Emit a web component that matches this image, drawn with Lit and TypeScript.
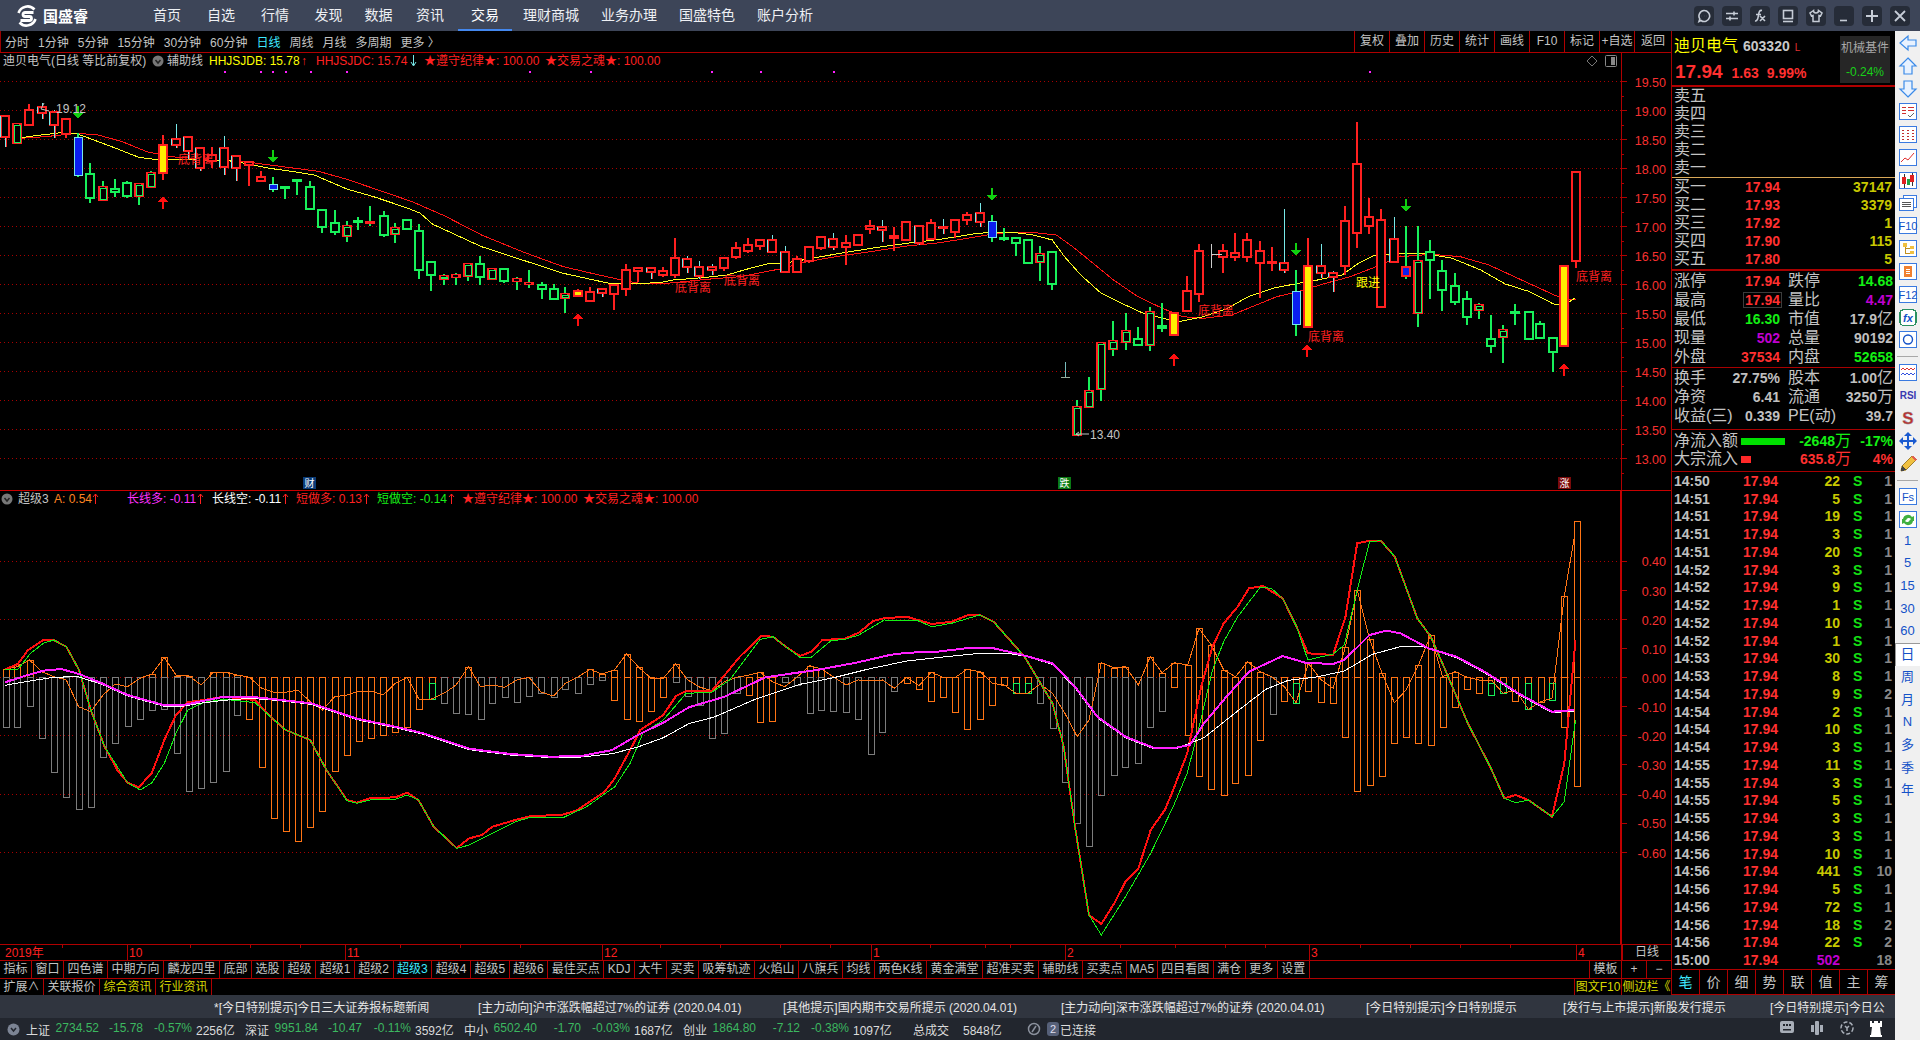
// tdx style stock terminal, price pane + indicator pane + quote panel
import { LitElement, html, css, svg } from 'lit';
import { customElement } from 'lit/decorators.js';

type Pt = [number, number];
type Candle = [number, number, number, number, number, string];
type Bar = [number, number, string, number?];

// the numbers below are read off crops of the reference, each crop has its own scale
const mapPts = (pts: Pt[], sx: number, ox: number, oy: number): Pt[] =>
	pts.map(([x, y]) => [ox + x / sx, oy + y / 3] as Pt);
const toPoints = (pts: Pt[]) => pts.map(p => `${p[0].toFixed(1)},${p[1].toFixed(1)}`).join(' ');

const candlesA: Candle[] = [
	[12, 78, 78, 142, 172, 'c'], [41, 100, 103, 160, 162, 'm'], [70, 42, 60, 106, 106, 'r'], [103, 38, 52, 68, 88, 'c'],
	[133, 60, 67, 105, 143, 'c'], [162, 88, 88, 132, 143, 'r'], [191, 130, 142, 255, 260, 'b'], [221, 220, 253, 325, 340, 'g'],
	[252, 273, 290, 330, 330, 'm'], [282, 268, 296, 307, 320, 'g'], [311, 273, 280, 318, 323, 'g'], [340, 283, 283, 317, 345, 'm'],
	[370, 243, 248, 290, 290, 'm'], [399, 135, 165, 248, 270, 'y'], [431, 102, 148, 166, 175, 'c'], [461, 142, 142, 182, 208, 'c'],
	[490, 175, 175, 233, 242, 'c'], [519, 172, 195, 212, 235, 'r'], [549, 138, 175, 230, 255, 'c'], [578, 198, 198, 233, 273, 'c'],
	[610, 215, 215, 226, 288, 'r'], [640, 243, 262, 272, 275, 'r'], [669, 262, 282, 297, 305, 'b'], [699, 290, 292, 295, 327, 'g'],
	[728, 271, 271, 274, 315, 'g'], [760, 273, 290, 358, 358, 'g'], [790, 361, 361, 412, 428, 'g'], [820, 360, 400, 425, 435, 'g'],
	[849, 392, 408, 437, 457, 'm'], [878, 380, 392, 396, 420, 'g'], [907, 348, 395, 397, 408, 'm'], [940, 363, 378, 435, 440, 'g'],
	[968, 400, 415, 433, 458, 'm'], [997, 391, 391, 418, 418, 'g'], [1027, 402, 424, 541, 567, 'g'], [1057, 517, 517, 556, 602, 'g'],
	[1088, 552, 559, 566, 585, 'm'], [1117, 550, 555, 560, 585, 'm'], [1147, 521, 521, 558, 573, 'm'], [1176, 498, 523, 560, 585, 'g'],
	[1206, 537, 537, 567, 567, 'm'], [1236, 538, 538, 572, 578, 'g'], [1266, 562, 568, 572, 600, 'm'], [1297, 541, 580, 583, 595, 'm'],
	[1327, 576, 584, 598, 627, 'g'], [1357, 583, 598, 626, 630, 'g'], [1385, 591, 612, 625, 668, 'm'], [1417, 597, 604, 617, 622, 'y'],
	[1446, 592, 605, 632, 632, 'r'], [1476, 596, 596, 610, 622, 'c'], [1505, 586, 586, 611, 660, 'r'], [1533, 522, 540, 598, 617, 'r'],
	[1563, 535, 535, 544, 576, 'r'],
];
const candlesB: Candle[] = [
	[33, 292, 295, 306, 327, 'c'], [68, 292, 304, 314, 320, 'r'], [104, 205, 263, 316, 325, 'r'], [141, 258, 267, 292, 308, 'c'],
	[178, 273, 292, 317, 328, 'c'], [217, 283, 290, 301, 315, 'c'], [252, 263, 263, 295, 302, 'r'], [288, 217, 233, 260, 267, 'r'],
	[324, 205, 224, 243, 249, 'r'], [360, 209, 209, 227, 240, 'r'], [397, 195, 210, 245, 248, 'c'], [436, 228, 247, 307, 308, 'c'],
	[470, 258, 266, 305, 305, 'r'], [507, 230, 230, 272, 280, 'r'], [543, 198, 202, 234, 240, 'r'], [580, 190, 208, 231, 240, 'c'],
	[618, 195, 219, 231, 285, 'r'], [654, 194, 194, 224, 228, 'r'], [690, 150, 167, 176, 192, 'r'], [727, 150, 170, 180, 215, 'c'],
	[762, 170, 197, 205, 243, 'r'], [798, 157, 157, 209, 209, 'r'], [838, 168, 168, 220, 225, 'c'], [873, 148, 158, 208, 208, 'r'],
	[909, 148, 170, 175, 192, 'c'], [945, 150, 150, 185, 203, 'r'], [981, 127, 135, 151, 165, 'r'], [1020, 98, 130, 157, 170, 'c'],
	[1056, 135, 152, 200, 215, 'b'], [1092, 174, 204, 207, 212, 'g'], [1129, 205, 205, 218, 258, 'g'], [1165, 211, 211, 278, 280, 'g'],
	[1200, 228, 252, 277, 332, 'm'],
];
const candlesC: Candle[] = [
	[30, 453, 456, 553, 570, 'g'], [90, 900, 920, 1005, 1005, 'm'], [120, 832, 873, 922, 922, 'm'], [150, 730, 730, 868, 902, 'm'],
	[180, 663, 723, 748, 767, 'm'], [210, 640, 692, 727, 750, 'm'], [240, 682, 718, 736, 736, 'g'], [270, 622, 636, 736, 752, 'm'],
	[299, 610, 677, 684, 697, 'g'], [328, 638, 638, 704, 704, 'y'], [360, 528, 573, 634, 634, 'r'], [390, 432, 452, 583, 605, 'r'],
	[449, 433, 453, 470, 518, 'r'], [478, 400, 458, 472, 482, 'r'], [507, 400, 420, 472, 485, 'r'], [539, 423, 452, 490, 595, 'r'],
	[568, 441, 487, 490, 512, 'r'], [598, 327, 490, 511, 518, 'c'], [627, 510, 573, 672, 708, 'b'], [656, 414, 498, 680, 680, 'y'],
	[689, 432, 497, 520, 535, 'c'], [717, 513, 520, 532, 575, 'c'], [747, 318, 362, 498, 525, 'r'], [776, 66, 192, 400, 443, 'r'],
	[806, 293, 350, 377, 402, 'r'], [836, 327, 360, 622, 622, 'r'], [868, 352, 418, 487, 487, 'c'], [897, 378, 500, 527, 537, 'u'],
	[927, 378, 483, 640, 680, 'm'], [956, 420, 457, 481, 596, 'g'], [986, 480, 512, 571, 633, 'g'], [1017, 520, 557, 607, 614, 'g'],
	[1047, 573, 598, 651, 674, 'g'], [1076, 610, 616, 629, 656, 'm'], [1105, 645, 718, 738, 758, 'g'], [1134, 676, 690, 712, 788, 'm'],
	[1164, 612, 636, 638, 674, 'g'], [1197, 637, 637, 718, 718, 'g'], [1226, 663, 673, 715, 716, 'g'], [1256, 710, 715, 757, 815, 'g'],
	[1285, 497, 497, 737, 737, 'y'], [1314, 215, 215, 484, 503, 'r'],
];

const toFull = (list: Candle[], sx: number, ox: number, oy: number): Candle[] =>
	list.map(([x, a, b, c, d, k]) => [
		Math.round(ox + x / sx), Math.round(oy + a / 3), Math.round(oy + b / 3),
		Math.round(oy + c / 3), Math.round(oy + d / 3), k,
	] as Candle);

const candles = [...toFull(candlesA, 2.45, 0, 90), ...toFull(candlesB, 3, 640, 170), ...toFull(candlesC, 2.45, 1040, 100)];

const maYellow: Pt[] = [
	...mapPts([[50, 143], [100, 135], [150, 128], [190, 132], [230, 150], [280, 173], [340, 202], [390, 210], [440, 208], [500, 210], [560, 212], [600, 220], [660, 235], [720, 245], [770, 255], [850, 297], [920, 322], [1000, 355], [1030, 370], [1060, 403], [1100, 425], [1180, 470], [1280, 510], [1380, 550], [1500, 582]], 2.45, 0, 90),
	...mapPts([[0, 340], [60, 338], [100, 330], [200, 322], [260, 315], [330, 295], [390, 280], [430, 280], [500, 268], [600, 250], [700, 234], [800, 220], [900, 208], [1000, 192], [1060, 186], [1110, 186], [1180, 195], [1240, 210]], 3, 640, 170),
	...mapPts([[0, 410], [30, 420], [60, 470], [100, 525], [150, 580], [200, 610], [250, 638], [300, 655], [340, 665], [400, 650], [460, 625], [510, 590], [570, 565], [620, 553], [680, 540], [740, 525], [780, 490], [820, 466], [900, 460], [950, 462], [1010, 475], [1080, 510], [1140, 552], [1200, 575], [1258, 612], [1285, 615], [1310, 595]], 2.45, 1040, 100),
];
const maRed: Pt[] = [
	...mapPts([[50, 145], [110, 140], [190, 130], [240, 135], [300, 155], [360, 185], [420, 200], [500, 208], [600, 215], [680, 228], [780, 244], [850, 268], [950, 310], [1010, 335], [1090, 378], [1180, 435], [1280, 485], [1380, 530], [1450, 550], [1530, 572]], 2.45, 0, 90),
	...mapPts([[0, 340], [80, 340], [200, 328], [300, 320], [430, 295], [500, 275], [600, 258], [700, 244], [800, 228], [900, 218], [1000, 202], [1060, 192], [1120, 187], [1180, 187]], 3, 640, 170),
	...mapPts([[0, 400], [40, 405], [80, 440], [130, 490], [180, 540], [240, 590], [300, 625], [350, 650], [400, 655], [470, 645], [530, 615], [580, 590], [640, 572], [700, 550], [760, 530], [830, 497], [880, 470], [960, 463], [1030, 470], [1100, 495], [1180, 540], [1260, 585], [1290, 597], [1312, 597]], 2.45, 1040, 100),
];

// x, bottom, colour (g grey, o orange, n green tail), top of the orange part above zero
const barsA: Bar[] = [
	[11, 742, 'g', 568], [34, 742, 'g', 552], [58, 677, 'g', 540], [82, 775, 'g'], [106, 877, 'g'], [130, 952, 'g'], [154, 988, 'g'], [178, 980, 'g'],
	[202, 830, 'g'], [226, 790, 'g'], [250, 737, 'g'], [274, 716, 'g'], [298, 690, 'g', 582], [322, 686, 'g', 532], [346, 820, 'g', 587], [370, 932, 'g', 587],
	[394, 925, 'g'], [418, 905, 'g', 577], [442, 872, 'g', 577], [465, 706, 'g', 585], [489, 718, 'o'], [513, 862, 'o'], [537, 1015, 'o'], [560, 1052, 'o'],
	[584, 1082, 'o'], [608, 1042, 'o'], [632, 992, 'o'], [656, 872, 'o'], [680, 826, 'o'], [703, 784, 'o'], [727, 775, 'o'], [751, 765, 'o'],
	[775, 757, 'o'], [798, 740, 'o'], [822, 686, 'o'], [846, 657, 'n'], [870, 670, 'g'], [894, 700, 'g'], [918, 703, 'g', 560], [942, 716, 'g'],
	[965, 668, 'g'], [989, 652, 'g'], [1013, 665, 'g'], [1037, 648, 'g'], [1061, 638, 'g'], [1085, 650, 'g'], [1108, 628, 'g'], [1132, 640, 'g'],
	[1156, 612, 'g', 568], [1180, 600, 'g', 582], [1204, 660, 'o', 570], [1228, 718, 'o', 522], [1252, 722, 'o', 562], [1276, 694, 'o'], [1300, 650, 'o'], [1324, 605, 'g', 552],
	[1348, 648, 'g'], [1372, 676, 'g'], [1396, 775, 'g'], [1420, 758, 'g'], [1444, 640, 'g'], [1468, 646, 'o'], [1490, 727, 'o', 577], [1514, 723, 'o'],
	[1538, 606, 'g'], [1562, 615, 'g'],
];
const barsB: Bar[] = [
	[17, 700, 'g', 557], [38, 690, 'g', 567], [59, 692, 'g'], [82, 695, 'g'], [104, 718, 'g'], [126, 823, 'g'], [147, 757, 'g'], [168, 633, 'g'],
	[190, 610, 'o'], [212, 628, 'o'], [234, 664, 'o', 577], [255, 652, 'o'], [277, 695, 'o'], [298, 746, 'o', 568], [321, 718, 'o', 575], [343, 676, 'o'],
	[364, 615, 'o'], [385, 640, 'n'], [406, 640, 'n'], [428, 670, 'g'], [450, 743, 'g'], [472, 907, 'g'], [494, 1030, 'g'], [515, 1097, 'g'],
	[537, 946, 'g', 548], [559, 885, 'g', 563], [580, 860, 'g', 560], [603, 850, 'g'], [624, 740, 'g', 530], [645, 693, 'g', 578], [667, 620, 'o', 548], [691, 765, 'o', 555],
	[711, 887, 'o', 445], [733, 928, 'o', 495], [755, 945, 'o', 570], [776, 910, 'o'], [798, 886, 'o', 545], [820, 780, 'o', 575], [842, 703, 'g'], [863, 662, 'o'],
	[884, 668, 'n'], [906, 634, 'o', 550], [929, 665, 'o'], [950, 670, 'o'], [972, 770, 'o', 500], [993, 932, 'o', 330], [1015, 916, 'o', 478], [1037, 888, 'o', 578],
	[1059, 790, 'o'], [1080, 770, 'o'], [1102, 790, 'o', 556], [1124, 796, 'o', 465], [1145, 740, 'o'], [1167, 680, 'o', 575], [1189, 628, 'o'], [1210, 640, 'o'],
	[1232, 644, 'n'], [1253, 640, 'n'], [1275, 662, 'o'], [1298, 688, 'n'], [1320, 665, 'o'], [1340, 660, 'n'], [1362, 740, 'o', 348], [1384, 917, 'o', 124],
];

const zigzag: Pt[] = [
	...mapPts([[10, 568], [34, 560], [58, 540], [82, 575], [106, 590], [130, 600], [154, 680], [178, 695], [202, 645], [226, 612], [250, 620], [274, 595], [298, 582], [322, 532], [346, 587], [370, 587], [394, 615], [418, 577], [442, 577], [465, 585], [489, 592], [513, 625], [537, 637], [560, 637], [584, 630], [608, 665], [632, 690], [656, 650], [680, 645], [703, 633], [727, 633], [751, 645], [775, 610], [798, 592], [822, 660], [846, 657], [870, 640], [894, 615], [918, 560], [942, 620], [965, 615], [989, 622], [1013, 600], [1037, 592], [1061, 637], [1085, 648], [1108, 610], [1132, 592], [1156, 568], [1180, 582], [1204, 570], [1228, 522], [1252, 562], [1276, 595], [1300, 595], [1324, 552], [1348, 600], [1372, 622], [1396, 632], [1420, 605], [1444, 592], [1468, 585], [1490, 577], [1514, 605], [1538, 620], [1562, 592]], 1.96, 0, 480),
	...mapPts([[17, 557], [38, 567], [59, 590], [82, 615], [104, 600], [126, 602], [147, 600], [168, 625], [190, 592], [212, 617], [234, 577], [255, 592], [277, 592], [298, 568], [321, 575], [343, 610], [364, 615], [385, 640], [406, 640], [428, 612], [450, 640], [472, 700], [494, 770], [515, 720], [537, 548], [559, 563], [580, 560], [603, 615], [624, 530], [645, 578], [667, 548], [691, 555], [711, 445], [733, 495], [755, 570], [776, 590], [798, 545], [820, 575], [842, 592], [863, 620], [884, 668], [906, 550], [929, 600], [950, 625], [972, 500], [993, 330], [1015, 478], [1037, 578], [1059, 668], [1080, 630], [1102, 556], [1124, 465], [1145, 590], [1167, 575], [1189, 592], [1210, 600], [1232, 600], [1253, 640], [1275, 630], [1298, 688], [1320, 665], [1340, 655], [1362, 348], [1380, 170]], 1.782, 800, 480),
];

const lineRed: Pt[] = [
	...mapPts([[10, 568], [35, 552], [55, 510], [85, 480], [105, 480], [130, 500], [155, 570], [178, 690], [205, 800], [230, 870], [250, 908], [272, 922], [298, 878], [322, 780], [345, 705], [368, 667], [400, 660], [440, 650], [500, 660], [530, 710], [560, 750], [608, 780], [640, 870], [680, 960], [700, 968], [725, 955], [775, 952], [798, 938], [820, 960], [850, 1040], [895, 1104], [920, 1075], [945, 1065], [965, 1040], [1010, 1020], [1040, 1008], [1100, 1005], [1130, 992], [1185, 935], [1205, 895], [1235, 810], [1255, 750], [1300, 705], [1325, 648], [1345, 633], [1395, 633], [1450, 530], [1492, 468], [1515, 470], [1540, 500]], 1.96, 0, 480),
	...mapPts([[0, 528], [20, 515], [40, 480], [80, 476], [105, 458], [130, 423], [150, 415], [190, 410], [235, 432], [270, 425], [300, 405], [320, 404], [345, 425], [400, 530], [450, 670], [470, 800], [490, 1040], [515, 1305], [537, 1332], [560, 1270], [580, 1205], [603, 1165], [625, 1050], [650, 990], [665, 930], [690, 820], [715, 620], [735, 500], [755, 430], [780, 380], [800, 325], [825, 318], [860, 355], [885, 440], [905, 520], [950, 525], [972, 410], [993, 190], [1015, 182], [1035, 182], [1060, 230], [1100, 415], [1124, 470], [1150, 570], [1190, 730], [1230, 860], [1255, 955], [1275, 945], [1298, 960], [1340, 1010], [1362, 850], [1382, 480]], 1.782, 800, 480),
];
const lineGreen: Pt[] = [
	...mapPts([[10, 568], [35, 568], [60, 520], [85, 490], [105, 480], [130, 500], [155, 570], [178, 690], [205, 800], [250, 908], [275, 930], [298, 908], [322, 850], [345, 760], [368, 690], [400, 667], [440, 658], [500, 668], [530, 710], [560, 750], [608, 780], [640, 870], [680, 962], [700, 970], [725, 960], [775, 958], [798, 945], [820, 960], [850, 1040], [895, 1105], [920, 1095], [965, 1060], [1010, 1025], [1040, 1012], [1105, 1012], [1150, 980], [1205, 920], [1235, 850], [1260, 760], [1300, 720], [1345, 640], [1395, 637], [1430, 600], [1490, 478], [1515, 470], [1540, 500]], 1.96, 0, 480),
	...mapPts([[0, 532], [20, 532], [55, 482], [80, 478], [105, 465], [150, 420], [210, 422], [235, 440], [270, 430], [320, 405], [345, 425], [400, 530], [450, 670], [470, 800], [490, 1040], [515, 1305], [537, 1365], [580, 1250], [625, 1120], [665, 980], [690, 880], [710, 750], [735, 570], [755, 485], [780, 410], [820, 322], [840, 325], [860, 355], [885, 440], [905, 540], [950, 522], [970, 495], [993, 330], [1015, 185], [1035, 182], [1060, 230], [1100, 415], [1124, 470], [1150, 570], [1190, 730], [1230, 860], [1255, 955], [1275, 968], [1298, 960], [1340, 1010], [1362, 965], [1382, 720]], 1.782, 800, 480),
];
const lineMagenta: Pt[] = [
	...mapPts([[10, 607], [50, 587], [85, 572], [120, 567], [155, 582], [200, 610], [250, 645], [320, 675], [360, 675], [400, 662], [440, 650], [490, 650], [540, 658], [610, 670], [700, 716], [780, 742], [830, 760], [920, 806], [1000, 822], [1080, 830], [1140, 828], [1200, 810], [1250, 765], [1300, 728], [1350, 682], [1420, 650], [1500, 592]], 1.96, 0, 480),
	...mapPts([[0, 577], [30, 570], [100, 548], [160, 525], [190, 518], [240, 516], [300, 504], [340, 503], [390, 522], [450, 550], [490, 620], [530, 710], [580, 770], [630, 803], [670, 803], [695, 795], [720, 730], [760, 650], [800, 575], [860, 528], [900, 548], [950, 552], [970, 540], [1015, 465], [1045, 452], [1070, 460], [1120, 505], [1170, 530], [1220, 575], [1280, 640], [1340, 695], [1380, 690]], 1.782, 800, 480),
];
const lineWhite: Pt[] = [
	...mapPts([[10, 613], [50, 602], [100, 590], [150, 586], [200, 610], [250, 645], [320, 675], [360, 675], [400, 665], [440, 658], [490, 652], [540, 658], [610, 670], [700, 716], [780, 742], [830, 760], [920, 806], [1000, 822], [1080, 830], [1140, 828], [1200, 818], [1250, 798], [1300, 770], [1350, 728], [1400, 708], [1480, 655]], 1.96, 0, 480),
	...mapPts([[0, 610], [60, 590], [120, 565], [190, 540], [260, 527], [320, 517], [370, 517], [400, 525], [450, 550], [490, 620], [530, 710], [580, 770], [630, 803], [670, 803], [720, 770], [780, 690], [830, 625], [870, 598], [920, 588], [970, 570], [1020, 520], [1070, 497], [1110, 497], [1170, 530], [1220, 575], [1280, 640], [1340, 695], [1380, 690]], 1.782, 800, 480),
];

const upArrows: Pt[] = [[163, 203], [578, 320], [1174, 360], [1307, 351], [1564, 370]];
const downArrows: Pt[] = [[78, 112], [273, 156], [992, 194], [1296, 249], [1406, 205]];
const divergence: Pt[] = [[196, 164], [693, 292], [742, 285], [1216, 315], [1326, 341], [1594, 281]];
const dots = [224, 260, 272, 285, 310, 346, 529, 590, 711, 760, 833, 1369];

const NAV: [string, number][] = [
	['首页', 54], ['自选', 54], ['行情', 54], ['发现', 53], ['数据', 47], ['资讯', 56], ['交易', 54],
	['理财商城', 78], ['业务办理', 78], ['国盛特色', 78], ['账户分析', 78],
];
const PERIODS = ['分时', '1分钟', '5分钟', '15分钟', '30分钟', '60分钟', '日线', '周线', '月线', '多周期', '更多 〉'];
const TOOLS = ['复权', '叠加', '历史', '统计', '画线', 'F10', '标记', '+自选', '返回'];
const TABS = [
	'指标', '窗口', '四色谱', '中期方向', '麟龙四里', '底部', '选股', '超级', '超级1', '超级2', '超级3', '超级4', '超级5', '超级6',
	'最佳买点', 'KDJ', '大牛', '买卖', '吸筹轨迹', '火焰山', '八旗兵', '均线', '两色K线', '黄金满堂', '超准买卖', '辅助线', '买卖点',
	'MA5', '四目看图', '满仓', '更多', '设置',
];
const BOOK: [string, string, string][] = [
	['买一', '17.94', '37147'], ['买二', '17.93', '3379'], ['买三', '17.92', '1'], ['买四', '17.90', '115'], ['买五', '17.80', '5'],
];
const TRADES: [string, string, string][] = [
	['14:50', '22', '1'], ['14:51', '5', '1'], ['14:51', '19', '1'], ['14:51', '3', '1'], ['14:51', '20', '1'], ['14:52', '3', '1'], ['14:52', '9', '1'],
	['14:52', '1', '1'], ['14:52', '10', '1'], ['14:52', '1', '1'], ['14:53', '30', '1'], ['14:53', '8', '1'], ['14:54', '9', '2'], ['14:54', '2', '1'],
	['14:54', '10', '1'], ['14:54', '3', '1'], ['14:55', '11', '1'], ['14:55', '3', '1'], ['14:55', '5', '1'], ['14:55', '3', '1'], ['14:56', '3', '1'],
	['14:56', '10', '1'], ['14:56', '441', '10'], ['14:56', '5', '1'], ['14:56', '72', '1'], ['14:56', '18', '2'], ['14:56', '22', '2'],
];
const NEWS: [string, number][] = [
	['*[今日特别提示]今日三大证券报标题新闻', 264], ['[主力动向]沪市涨跌幅超过7%的证券 (2020.04.01)', 305],
	['[其他提示]国内期市交易所提示 (2020.04.01)', 278], ['[主力动向]深市涨跌幅超过7%的证券 (2020.04.01)', 305],
	['[今日特别提示]今日特别提示', 197], ['[发行与上市提示]新股发行提示', 207], ['[今日特别提示]今日公', 125],
];
const INDEXES: string[][] = [
	['上证', '2734.52', '-15.78', '-0.57%', '2256亿'], ['深证', '9951.84', '-10.47', '-0.11%', '3592亿'],
	['中小', '6502.40', '-1.70', '-0.03%', '1687亿'], ['创业', '1864.80', '-7.12', '-0.38%', '1097亿'],
];

const RED = '#ff2020';
const GREEN = '#18f05a';
const CYAN = '#78e8e8';

const candle = ([x, hi, top, bot, lo, kind]: Candle) => {
	const bodyY = top;
	const bodyH = Math.max(bot - top, 1);
	const x0 = x - 4;
	switch (kind) {
		case 'y':
			return svg`<line x1=${x} x2=${x} y1=${hi} y2=${lo} stroke=${RED} stroke-width="2"/>
				<rect x=${x0} y=${bodyY} width="8" height=${bodyH} fill="#ffee00" stroke=${RED} stroke-width="2"/>`;
		case 'b':
			return svg`<line x1=${x} x2=${x} y1=${hi} y2=${lo} stroke=${GREEN} stroke-width="2"/>
				<rect x=${x0} y=${bodyY} width="8" height=${bodyH} fill="#0a1ef0" stroke=${CYAN}/>`;
		case 'u':
			return svg`<line x1=${x} x2=${x} y1=${hi} y2=${lo} stroke=${GREEN} stroke-width="2"/>
				<rect x=${x0} y=${bodyY} width="8" height=${bodyH} fill="#0a1ef0" stroke=${RED} stroke-width="2"/>`;
		case 'c':
			return svg`<line x1=${x} x2=${x} y1=${hi} y2=${lo} stroke=${CYAN}/>
				<line x1=${x + 1} x2=${x + 1} y1=${top} y2=${lo} stroke=${RED}/>
				<rect x=${x0} y=${bodyY} width="8" height=${bodyH} fill="#000" stroke=${RED} stroke-width="2"/>
				<line x1=${x0 - 1} x2=${x0 - 1} y1=${top} y2=${bot} stroke=${CYAN}/>`;
		case 'm':
			return svg`<line x1=${x} x2=${x} y1=${hi} y2=${lo} stroke=${GREEN} stroke-width="2"/>
				<rect x=${x0} y=${bodyY} width="8" height=${bodyH} fill="#000" stroke=${RED} stroke-width="2"/>
				<line x1=${x0 + 3} x2=${x0 + 3} y1=${top} y2=${bot} stroke="#000" stroke-width="5"/>
				<rect x=${x0 + 1} y=${bodyY + 1} width="6" height=${Math.max(bodyH - 2, 0)} fill="none" stroke=${GREEN}/>`;
		case 'g':
			return svg`<line x1=${x} x2=${x} y1=${hi} y2=${lo} stroke=${GREEN} stroke-width="2"/>
				<rect x=${x0} y=${bodyY} width="8" height=${bodyH} fill="#000" stroke=${GREEN} stroke-width="2"/>`;
		default:
			return svg`<line x1=${x} x2=${x} y1=${hi} y2=${lo} stroke=${RED} stroke-width="2"/>
				<rect x=${x0} y=${bodyY} width="8" height=${bodyH} fill="#000" stroke=${RED} stroke-width="2"/>`;
	}
};

const arrow = (x: number, y: number, up: boolean, color: string) => {
	const d = up ? 1 : -1;
	return svg`<path d="M${x} ${y - 7 * d}L${x + 5} ${y - d}H${x + 1}V${y + 6 * d}H${x - 1}V${y - d}H${x - 5}Z" fill=${color}/>`;
};

const bars = (list: Bar[], sx: number, ox: number) =>
	list.map(([zx, bottom, kind, top]) => {
		const x = Math.round(ox + zx / sx) - 3;
		const y = (z: number) => Math.round(480 + z / 3);
		const zero = y(592);
		const col = kind === 'o' || kind === 'n' ? '#ff7414' : '#7c7c7c';
		const tail = kind === 'n' ? y(610) : zero;
		return svg`
			${top !== undefined ? svg`<rect x=${x} y=${y(top)} width="6" height=${zero - y(top)} class="hollow" stroke="#ff7414"/>` : ''}
			<rect x=${x} y=${zero} width="6" height=${Math.max(y(bottom) - zero, 1)} class="hollow" stroke=${col}/>
			${kind === 'n' ? svg`<rect x=${x} y=${tail} width="6" height=${y(bottom) - tail} class="hollow" stroke=${GREEN}/>` : ''}`;
	});

@customElement('sidebar-icon')
class SidebarIcon extends LitElement {
	static properties = { name: { type: String } };
	declare name: string;

	static styles = css`
		:host { display: block; width: 25px; height: 22.8px; }
		svg { display: block; margin: 0 auto; shape-rendering: crispEdges; }
		text { font-family: "Liberation Sans", sans-serif; }
		.blue { fill: #1452c8; font-size: 11px; }
		.rsi { fill: #3a3ab0; font-size: 10px; font-weight: bold; }
	`;

	render() {
		const box = svg`<rect x="2.5" y="3.5" width="17" height="16" fill="#fff" stroke="#3a7ae0"/>`;
		const label = (t: string) => svg`${box}<text x="11" y="15.5" text-anchor="middle" class="blue">${t}</text>`;
		const arrowPath = (d: string) => svg`<path d=${d} fill="#e8f2ff" stroke="#3a8ae8" stroke-width="1.2" style="shape-rendering:auto"/>`;
		let g: unknown = '';
		switch (this.name) {
			case 'left': g = arrowPath('M3 11 L11 4 V8 H19 V14 H11 V18Z'); break;
			case 'up': g = arrowPath('M11 3 L19 11 H15 V19 H7 V11 H3Z'); break;
			case 'down': g = arrowPath('M11 19 L19 11 H15 V3 H7 V11 H3Z'); break;
			case 'check':
				g = svg`${box}<path d="M5 7h4M11 7h6M5 10h4M11 10h6M5 13h4" stroke="#d03030"/><path d="M11 15l2 2 4-4" stroke="#666" fill="none"/>`;
				break;
			case 'grid':
				g = svg`${box}<path d="M5 7h3M10 7h3M15 7h3M5 10h3M10 10h3M15 10h3M5 13h3M10 13h3M15 13h3M5 16h3M10 16h3M15 16h3" stroke="#c03030" stroke-dasharray="2 1"/>`;
				break;
			case 'line':
				g = svg`${box}<path d="M4 16l4-4 3 2 6-7" stroke="#e03030" fill="none" style="shape-rendering:auto"/>`;
				break;
			case 'candle':
				g = svg`${box}<path d="M7 5v14M15 4v13" stroke="#333"/><rect x="5" y="8" width="4" height="7" fill="#e02020"/><rect x="13" y="6" width="4" height="7" fill="#e02020"/><rect x="10" y="10" width="3" height="6" fill="#20a040"/>`;
				break;
			case 'docs':
				g = svg`<rect x="6.5" y="3.5" width="13" height="12" fill="#fff" stroke="#3a7ae0"/><rect x="2.5" y="6.5" width="14" height="12" fill="#fff" stroke="#3a7ae0"/><path d="M5 10h9M5 12h9M5 14h9" stroke="#555"/>`;
				break;
			case 'tree':
				g = svg`${box}<path d="M6 6h4v4H6zM13 9h4v3h-4zM13 14h4v3h-4z" fill="#f0c040"/><path d="M8 10v6h5M8 11h5" stroke="#c09020" fill="none"/>`;
				break;
			case 'book':
				g = svg`${box}<rect x="7" y="6" width="8" height="11" fill="#f08030"/><path d="M9 9h4M9 11h4M9 13h4" stroke="#fff"/>`;
				break;
			case 'fx':
				g = svg`<rect x="3" y="3.5" width="16" height="16" rx="4" fill="#fff" stroke="#2a9060" stroke-width="1.5"/><text x="11" y="16" text-anchor="middle" class="blue" font-style="italic" font-weight="bold">fx</text>`;
				break;
			case 'ring':
				g = svg`${box}<circle cx="11" cy="11.5" r="4.5" fill="none" stroke="#1452c8" stroke-width="1.4" style="shape-rendering:auto"/>`;
				break;
			case 'wave':
				g = svg`${box}<path d="M4 9l2-2 2 2 2-2 2 2 2-2 2 2 2-2" stroke="#e03030" fill="none"/><path d="M4 14l2-2 2 2 2-2 2 2 2-2 2 2 2-2" stroke="#3050e0" fill="none"/>`;
				break;
			case 'rsi':
				g = svg`<text x="11" y="15" text-anchor="middle" class="rsi">RSI</text>`;
				break;
			case 'money':
				g = svg`<text x="11" y="17" text-anchor="middle" font-size="17" font-weight="bold" fill="#c03030" stroke="#888" stroke-width=".4">S</text>`;
				break;
			case 'move':
				g = svg`<path d="M11 2l4 4h-3v4h4V7l4 4-4 4v-3h-4v4h3l-4 4-4-4h3v-4H6v3l-4-4 4-4v3h4V6H7z" fill="#1a5ad0" style="shape-rendering:auto"/>`;
				break;
			case 'pencil':
				g = svg`<path d="M4 19l1-5L15 4l4 4L9 18z" fill="#f0c040" stroke="#a08030" style="shape-rendering:auto"/><path d="M4 19l1-5 4 4z" fill="#444"/><path d="M14 5l4 4 1.5-1.5-4-4z" fill="#e06050"/>`;
				break;
			case 'refresh':
				g = svg`${box}<path d="M6 11a5 5 0 0 1 9-2l2-1v5h-5l2-2a3 3 0 0 0-5 1zM16 13a5 5 0 0 1-9 2l-2 1v-5h5l-2 2a3 3 0 0 0 5-1z" fill="#40b040" style="shape-rendering:auto"/>`;
				break;
			case 'F10': case 'F12': case 'Fs':
				g = label(this.name);
				break;
		}
		return html`<svg width="22" height="22" viewBox="0 0 22 22">${g}</svg>`;
	}
}

@customElement('app-root')
class AppRoot extends LitElement {
	static styles = css`
		:host {
			display: flex;
			flex-direction: column;
			width: 1920px;
			height: 1040px;
			overflow: hidden;
			background: #000;
			color: #c4c4c4;
			font-family: "Liberation Sans", "Noto Sans CJK SC", sans-serif;
			font-size: 12px;
		}
		/* top bar */
		.top {
			flex: none;
			height: 31px;
			display: flex;
			align-items: stretch;
			background: #3d4558;
		}
		.logo {
			width: 140px;
			display: flex;
			align-items: center;
			gap: 4px;
			padding-left: 15px;
			box-sizing: border-box;
			color: #fff;
		}
		.logo b { font-size: 15px; font-weight: 700; }
		.nav { display: flex; flex: 1; }
		.nav span {
			display: flex;
			align-items: center;
			justify-content: center;
			font-size: 14px;
			color: #eef0f4;
			box-sizing: border-box;
			padding-bottom: 2px;
			border-bottom: 2px solid transparent;
		}
		.nav .on { border-bottom-color: #4488ee; color: #fff; }
		.winbtns { display: flex; gap: 8px; padding-right: 10px; align-items: center; }
		.winbtn {
			width: 20px;
			height: 20px;
			border-radius: 4px;
			background: #262c38;
			display: flex;
			align-items: center;
			justify-content: center;
			color: #c6ccd6;
		}
		.body { flex: 1; display: flex; min-height: 0; }
		.content { flex: 1; display: flex; flex-direction: column; min-width: 0; }
		.work { flex: none; height: 964px; display: flex; }
		.left { width: 1671px; flex: none; display: flex; flex-direction: column; }
		/* period bar */
		.periods {
			flex: none;
			height: 21px;
			box-sizing: content-box;
			display: flex;
			align-items: center;
			justify-content: space-between;
			border-bottom: 1px solid #b00000;
			border-left: 1px solid #900;
			margin-bottom: -1px;
		}
		.period-list { display: flex; gap: 9px; padding-left: 4px; }
		.period-list .on { color: #3ee8ff; }
		.tools { display: flex; height: 100%; }
		.tools span {
			width: 34px;
			border-left: 1px solid #b00000;
			text-align: center;
			line-height: 21px;
		}
		.tools span:last-child { width: 36px; }
		svg.pane { display: block; flex: none; }
		svg.crisp, .crisp { shape-rendering: crispEdges; }
		.hollow { fill: none; }
		.grid { stroke: #a80000; stroke-dasharray: 1 3; fill: none; }
		.axis { stroke: #b00000; fill: none; }
		.t { font-size: 12px; }
		.price { fill: #f83030; text-anchor: end; font-size: 12.5px; }
		.gray { fill: #c4c4c4; }
		.yel { fill: #ffff00; }
		.redt { fill: #ff2020; }
		.ora { fill: #ff8420; }
		.mag { fill: #ff30ff; }
		.wht { fill: #fff; }
		.grn { fill: #18f018; }
		.div { fill: #ff2020; font-size: 12px; }
		.badge { font-size: 10px; fill: #fff; text-anchor: middle; }
		/* date row and tab rows */
		.dates { flex: none; height: 16px; display: flex; border-top: 1px solid #b00000; box-sizing: border-box; }
		.dates svg { width: 1621px; height: 15px; display: block; }
		.dates .cycle { flex: 1; text-align: center; line-height: 15px; border-left: 2px solid #b00000; }
		.tabs, .tabs2 {
			flex: none;
			display: flex;
			align-items: stretch;
			border-top: 1px solid #b00000;
			border-bottom: 1px solid #b00000;
			box-sizing: content-box;
		}
		.tabs { height: 17px; }
		.tabs2 { height: 16px; border-top: 0; }
		.tabs span, .tabs2 span {
			padding: 0 3.5px;
			border-right: 1px solid #b00000;
			line-height: 17px;
			white-space: nowrap;
		}
		.tabs .on { color: #3ee8ff; }
		.tabs .tight { padding: 0 2.5px; }
		.tabs2 .yl { color: #d8d800; }
		.fill { flex: 1; }
		.tabs .sq { width: 24px; padding: 0; text-align: center; border-right: 0; }
		.tabs .ml { border-left: 1px solid #b00000; border-right: 1px solid #b00000; }
		.tabs .pl { border-right: 1px solid #b00000; }
		.tabs2 .side { width: 49px; padding: 0; border-right: 0; text-align: center; border-left: 1px solid #b00000; }
		.tabs2 .tw { width: 46px; padding: 0; text-align: center; border-left: 1px solid #b00000; border-right: 0; }
		/* quote panel */
		.panel {
			flex: 1;
			display: flex;
			flex-direction: column;
			border-left: 1px solid #a80000;
			min-width: 0;
			font-size: 14px;
			font-weight: 700;
		}
		.head {
			flex: none;
			display: flex;
			border-bottom: 2px solid #b00000;
			box-sizing: content-box;
			height: 54px;
		}
		.head-main { flex: 1; padding: 1px 0 0 2px; }
		.title { display: flex; align-items: baseline; gap: 5px; height: 29px; }
		.title b { color: #ffff00; font-size: 16px; font-weight: 400; }
		.title em { font-style: normal; font-size: 14px; color: #c8c8c8; }
		.title i { font-style: normal; font-size: 10px; color: #e03030; font-weight: 400; }
		.last { display: flex; align-items: baseline; gap: 9px; color: #ff3030; padding-left: 1px; }
		.last b { font-size: 19px; }
		.last .p2 { margin-left: -1px; }
		.sector {
			width: 50px;
			height: 47px;
			margin: 5px 5px 0 0;
			background: #262626;
			text-align: center;
			font-weight: 400;
			font-size: 12px;
			color: #a8a8a8;
			line-height: 24px;
		}
		.sector div + div { color: #18d018; }
		.sells { flex: none; height: 90px; border-bottom: 1px solid #d8a858; }
		.sells div, .book div { height: 18px; line-height: 18px; }
		.cn { font-size: 16px; line-height: 18px; font-weight: 400; color: #c4c4c4; padding-left: 2px; white-space: nowrap; }
		.book { flex: none; height: 91px; border-bottom: 2px solid #a80000; box-sizing: content-box; }
		.book div { display: grid; grid-template-columns: 37px 71px 1fr; padding-right: 3px; }
		.r { text-align: right; white-space: nowrap; }
		.quad { flex: none; display: grid; grid-template-columns: 37px 71px 6px 37px 1fr; grid-auto-rows: 19px; align-items: center; padding-right: 2px; border-bottom: 1px solid #a80000; }
		.quad.q1 { height: 96px; }
		.quad.q2 { height: 61px; border-bottom-color: #a80000; }
		.red { color: #ff3030; }
		.green { color: #14f014; }
		.yellow { color: #c8c800; }
		.purple { color: #c000d0; }
		.lgray { color: #c0c0c0; }
		.box { outline: 1px solid #3c3c3c; outline-offset: -1px; justify-self: end; padding: 0 2px; margin-right: -2px; }
		.unit { font-size: 16px; line-height: 18px; font-weight: 400; }
		.flow { flex: none; height: 41px; border-bottom: 1px solid #a80000; }
		.flow > div { height: 18px; display: grid; grid-template-columns: 69px 45px 65px 1fr; grid-template-rows: 18px; align-items: center; padding-right: 2px; }
		.flow > div:first-child { margin-top: 2px; }
		.barcell span { display: block; height: 7px; }
		.trades { flex: 1; min-height: 0; display: grid; grid-auto-rows: 1fr; }
		.trades > div { display: grid; grid-template-columns: 40px 64px 62px 22px 1fr; align-items: center; padding: 0 3px 0 2px; }
		.trades .s { color: #14e014; padding-left: 13px; font-size: 14px; }
		.trades .n { color: #888; text-align: right; }
		.ptabs { flex: none; height: 24px; display: flex; border-top: 1px solid #b00000; border-bottom: 1px solid #b00000; box-sizing: content-box; }
		.ptabs span { width: 27px; text-align: center; border-right: 1px solid #b00000; font-weight: 400; font-size: 14px; line-height: 24px; }
		.ptabs span:last-child { border-right: 0; }
		.ptabs .on { color: #3ee8ff; }
		/* bottom strips */
		.ticker {
			flex: none;
			height: 23px;
			background: #30353f;
			display: flex;
			align-items: center;
			padding-left: 214px;
			color: #e6e6e6;
			overflow: hidden;
			white-space: nowrap;
		}
		.ticker span { flex: none; overflow: hidden; }
		.status {
			flex: 1;
			background: #22262e;
			display: flex;
			align-items: center;
			color: #dcdcdc;
			white-space: nowrap;
		}
		.status .dot { width: 26px; display: flex; justify-content: center; }
		.idx { display: grid; grid-template-columns: 28px 45px 44px 49px 53px; width: 219px; }
		.idx b { font-weight: 400; color: #3cb860; text-align: right; }
		.idx .amt { padding-left: 4px; }
		.total { margin-left: 11px; width: 50px; }
		.totalv { width: 64px; }
		.conn { display: flex; align-items: center; gap: 6px; }
		.conn i { font-style: normal; background: #566078; color: #dde; border-radius: 3px; width: 12px; height: 14px; text-align: center; line-height: 14px; font-size: 11px; margin-right: -5px; }
		.tray { margin-left: auto; display: flex; gap: 14px; padding-right: 12px; color: #a8aeb8; }
		.side-bar {
			flex: none;
			width: 25px;
			background: #f0f0f0;
			display: flex;
			flex-direction: column;
			padding-top: 1px;
			color: #1452c8;
			font-size: 12px;
			text-align: center;
		}
		.side-sep { height: 1px; margin: 5px 2px 4px; background: #a8a8a8; flex: none; }
		.side-bar .ch { height: 22.7px; line-height: 22px; font-size: 13px; flex: none; }
		.side-bar .ch.first { margin-top: -1px; }
		.side-bar .cur { background: #fff; box-shadow: inset 1px 1px 0 #999; font-size: 14px; }
	`;

	renderPrice() {
		const lines: number[] = [];
		for (let k = -1; k <= 12; k++) lines.push(110.5 + k * 29);
		const labels = lines.map((y, k) => ((19.5 - k * 0.5).toFixed(2)));
		return html`<svg class="pane" width="1671" height="439" viewBox="0 52 1671 439">
			<g class="crisp">
				${lines.map(y => svg`<line class="grid" x1="0" x2="1621" y1=${y} y2=${y}/>`)}
				${dots.map(x => svg`<rect x=${x} y="71" width="2" height="2" fill="#ff20ff"/>`)}
				<line class="axis" x1="1621.5" x2="1621.5" y1="52" y2="491"/>
				${lines.map(y => svg`<line class="axis" x1="1621" x2="1627" y1=${y} y2=${y}/><line class="axis" x1="1621" x2="1624" y1=${y + 14.5} y2=${y + 14.5}/>`)}
				<polyline points=${toPoints(maRed)} fill="none" stroke="#ff1414"/>
				<polyline points=${toPoints(maYellow)} fill="none" stroke="#ffff20"/>
				${candles.map(candle)}
				<line x1="1065" x2="1065" y1="362" y2="377" stroke="#7bb"/>
				<line x1="1061" x2="1070" y1="377" y2="377" stroke="#9a9"/>
				<path d="M1212 254h10M1211 244v24" stroke="#ccc" fill="none"/>
				${upArrows.map(([x, y]) => arrow(x, y, true, '#ff1010'))}
				${downArrows.map(([x, y]) => arrow(x, y, false, '#10d010'))}
			</g>
			${lineLegend()}
			${labels.map((t, k) => svg`<text class="price" x="1666" y=${lines[k] + 5}>${t}</text>`)}
			${divergence.map(([x, y]) => svg`<text class="div" x=${x - 18} y=${y}>底背离</text>`)}
			<text class="yel" style="font-size:12px" x="1356" y="287">跟进</text>
			<path d="M1076 434h13M1076 434l3-2M1076 434l3 2" stroke="#c4c4c4" fill="none"/>
			<text class="gray t" x="1090" y="439">13.40</text>
			<path d="M44 103l-3 6M41 109l8 2" stroke="#c4c4c4" fill="none"/>
			<text class="gray t" x="56" y="113">19.12</text>
			<rect x="303" y="477" width="13" height="12" fill="#0a3c78"/><text class="badge" x="309.5" y="487">财</text>
			<rect x="1058" y="477" width="13" height="12" fill="#0a7a14"/><text class="badge" x="1064.5" y="487">跌</text>
			<rect x="1558" y="477" width="13" height="12" fill="#7a0a0a"/><text class="badge" x="1564.5" y="487">涨</text>
			<path d="M1592 56l5 5-5 5-5-5z" fill="none" stroke="#777"/>
			<rect x="1605.5" y="55.5" width="11" height="11" rx="1" fill="none" stroke="#888"/><rect x="1611" y="57" width="4" height="8" fill="#888"/>
			<line x1="0" x2="1671" y1="490.5" y2="490.5" stroke="#c80000"/>
		</svg>`;
	}

	renderIndicator() {
		const gy = [561.3, 619.5, 677.5, 735.7, 794, 852.5];
		const ticks = [[0.4, 561.3], [0.3, 590.5], [0.2, 619.5], [0.1, 648.5], [0, 677.5], [-0.1, 706.5], [-0.2, 735.7], [-0.3, 764.8], [-0.4, 794], [-0.5, 823], [-0.6, 852.5]];
		return html`<svg class="pane" width="1671" height="453" viewBox="0 491 1671 453">
			<g class="crisp">
				${gy.map(y => svg`<line class="grid" x1="0" x2="1621" y1=${y} y2=${y}/>`)}
				${ticks.map(([, y]) => svg`<line class="axis" x1="1621" x2="1627" y1=${y} y2=${y}/>`)}
				${bars(barsA, 1.96, 0)}
				${bars(barsB, 1.782, 800)}
				<polyline points=${toPoints(zigzag)} fill="none" stroke="#ff7414"/>
				<polyline points=${toPoints(lineRed)} fill="none" stroke="#ff1010" stroke-width="2"/>
				<polyline points=${toPoints(lineGreen)} fill="none" stroke="#14f014"/>
				<polyline points=${toPoints(lineWhite)} transform="translate(0 1)" fill="none" stroke="#ffffff"/>
				<polyline points=${toPoints(lineMagenta)} fill="none" stroke="#ff20ff" stroke-width="2"/>
				<line x1="1621" x2="1621" y1="491" y2="944" stroke="#c00000" stroke-width="2"/>
			</g>
			${ticks.map(([v, y]) => svg`<text class="price" x="1666" y=${y + 5}>${v.toFixed(2)}</text>`)}
			${bottomLegend()}
		</svg>`;
	}

	renderDates() {
		const majors: [number, string][] = [[5, '2019年'], [127, '10'], [345, '11'], [602, '12'], [871, '1'], [1065, '2'], [1309, '3'], [1576, '4']];
		const minor = [62, 190, 250, 300, 400, 460, 520, 660, 720, 780, 830, 930, 985, 1010, 1120, 1175, 1225, 1265, 1360, 1410, 1460, 1510];
		return html`<svg class="crisp">
			${majors.slice(1).map(([x]) => svg`<line x1=${x} x2=${x} y1="0" y2="15" stroke="#b00000"/>`)}
			${minor.map(x => svg`<line x1=${x} x2=${x} y1="0" y2="3" stroke="#b00000"/>`)}
			${majors.map(([x, t]) => svg`<text class="redt t" style="shape-rendering:auto" x=${x + (x === 5 ? 0 : 2)} y="12">${t}</text>`)}
		</svg>`;
	}

	renderPanel() {
		const sells = ['卖五', '卖四', '卖三', '卖二', '卖一'];
		return html`<div class="panel">
			<div class="head">
				<div class="head-main">
					<div class="title"><b>迪贝电气</b><em>603320</em><i>L</i></div>
					<div class="last"><b>17.94</b><span>1.63</span><span class="p2">9.99%</span></div>
				</div>
				<div class="sector"><div>机械基件</div><div>-0.24%</div></div>
			</div>
			<div class="sells">${sells.map(s => html`<div class="cn">${s}</div>`)}</div>
			<div class="book">
				${BOOK.map(([n, p, v]) => html`<div><span class="cn">${n}</span><span class="r red">${p}</span><span class="r yellow">${v}</span></div>`)}
			</div>
			<div class="quad q1">
				<span class="cn">涨停</span><span class="r red">17.94</span><i></i><span class="cn">跌停</span><span class="r green">14.68</span>
				<span class="cn">最高</span><span class="r red box">17.94</span><i></i><span class="cn">量比</span><span class="r purple">4.47</span>
				<span class="cn">最低</span><span class="r green">16.30</span><i></i><span class="cn">市值</span><span class="r lgray">17.9<span class="unit">亿</span></span>
				<span class="cn">现量</span><span class="r purple">502</span><i></i><span class="cn">总量</span><span class="r lgray">90192</span>
				<span class="cn">外盘</span><span class="r red">37534</span><i></i><span class="cn">内盘</span><span class="r green">52658</span>
			</div>
			<div class="quad q2">
				<span class="cn">换手</span><span class="r lgray">27.75%</span><i></i><span class="cn">股本</span><span class="r lgray">1.00<span class="unit">亿</span></span>
				<span class="cn">净资</span><span class="r lgray">6.41</span><i></i><span class="cn">流通</span><span class="r lgray">3250<span class="unit">万</span></span>
				<span class="cn">收益(三)</span><span class="r lgray">0.339</span><i></i><span class="cn">PE(动)</span><span class="r lgray">39.7</span>
			</div>
			<div class="flow">
				<div><span class="cn">净流入额</span><span class="barcell"><span style="width:44px;background:#00e000"></span></span><span class="r green">-2648<span class="unit">万</span></span><span class="r green">-17%</span></div>
				<div><span class="cn">大宗流入</span><span class="barcell"><span style="width:10px;background:#ff2828"></span></span><span class="r red">635.8<span class="unit">万</span></span><span class="r red">4%</span></div>
			</div>
			<div class="trades">
				${TRADES.map(([t, v, n]) => html`<div><span class="lgray">${t}</span><span class="r red">17.94</span><span class="r yellow">${v}</span><span class="s">S</span><span class="n">${n}</span></div>`)}
				<div><span class="lgray">15:00</span><span class="r red">17.94</span><span class="r purple">502</span><span class="s"></span><span class="n">18</span></div>
			</div>
			<div class="ptabs">
				${['笔', '价', '细', '势', '联', '值', '主', '筹'].map((t, i) => html`<span class=${i === 0 ? 'on' : ''}>${t}</span>`)}
			</div>
		</div>`;
	}

	render() {
		return html`
			<header class="top">
				<div class="logo">
					<svg width="24" height="24" viewBox="0 0 24 24">
						<path d="M3.5 9A9.5 9.5 0 0 1 19.5 5.5M20.500 15A9.5 9.5 0 0 1 4.500 18.500" fill="none" stroke="#fff" stroke-width="2.6"/>
						<path d="M18.500 8.500H10a2 2 0 0 0 0 4h4.500a2 2 0 0 1 0 4H5.500" fill="none" stroke="#fff" stroke-width="2.8"/>
					</svg>
					<b>国盛睿</b>
				</div>
				<nav class="nav">
					${NAV.map(([t, w]) => html`<span class=${t === '交易' ? 'on' : ''} style="width:${w}px">${t}</span>`)}
				</nav>
				<div class="winbtns">
					<div class="winbtn"><svg width="14" height="14" viewBox="0 0 14 14" fill="none" stroke="currentColor" stroke-width="1.6"><path d="M7 1.500a5.500 5.500 0 1 1-3 10l-2 1 .8-2.600A5.500 5.500 0 0 1 7 1.500z"/><path d="M4.500 7h.1M7 7h.1M9.500 7h.1"/></svg></div>
					<div class="winbtn"><svg width="14" height="14" viewBox="0 0 14 14" fill="none" stroke="currentColor" stroke-width="1.6"><path d="M1 4.500h12M1 9.500h12"/><path d="M9 2.500v4M5 7.500v4"/></svg></div>
					<div class="winbtn"><svg width="14" height="14" viewBox="0 0 14 14" fill="none" stroke="currentColor" stroke-width="1.6"><path d="M9 1.500C6.500 1 6 3 5.500 6S4.500 12.500 2 12M3 5.500h5M7 7l5 5M12 7l-5 5"/></svg></div>
					<div class="winbtn"><svg width="14" height="14" viewBox="0 0 14 14" fill="none" stroke="currentColor" stroke-width="1.6"><rect x="2.500" y="1.500" width="9" height="8"/><path d="M2 12.500h10"/></svg></div>
					<div class="winbtn"><svg width="14" height="14" viewBox="0 0 14 14" fill="none" stroke="currentColor" stroke-width="1.5"><path d="M4.500 1.500L1 4l1.500 3L4 6.500v6h6v-6L11.500 7 13 4 9.500 1.500a2.500 2.500 0 0 1-5 0z"/></svg></div>
					<div class="winbtn"><svg width="14" height="14" viewBox="0 0 14 14" fill="none" stroke="currentColor" stroke-width="1.6"><path d="M3 11.500h7"/></svg></div>
					<div class="winbtn"><svg width="14" height="14" viewBox="0 0 14 14" fill="none" stroke="currentColor" stroke-width="2"><path d="M7 1v6M1 7h12M7 7v6"/></svg></div>
					<div class="winbtn"><svg width="14" height="14" viewBox="0 0 14 14" fill="none" stroke="currentColor" stroke-width="1.8"><path d="M2 2l10 10M12 2L2 12"/></svg></div>
				</div>
			</header>
			<div class="body">
				<div class="content">
					<div class="work">
						<div class="left">
							<div class="periods">
								<div class="period-list">
									${PERIODS.map(p => html`<span class=${p === '日线' ? 'on' : ''}>${p}</span>`)}
								</div>
								<div class="tools">${TOOLS.map(t => html`<span>${t}</span>`)}</div>
							</div>
							${this.renderPrice()}
							${this.renderIndicator()}
							<div class="dates">${this.renderDates()}<div class="cycle">日线</div></div>
							<div class="tabs">
								${TABS.map(t => html`<span class="${t === '超级3' ? 'on' : ''} ${t === 'MA5' ? 'tight' : ''}">${t}</span>`)}
								<div class="fill"></div>
								<span class="ml">模板</span><span class="sq pl">+</span><span class="sq">−</span>
							</div>
							<div class="tabs2">
								<span>扩展∧</span><span>关联报价</span><span class="yl">综合资讯</span><span class="yl">行业资讯</span>
								<div class="fill"></div>
								<span class="yl tw">图文F10</span><span class="yl side">侧边栏《</span>
							</div>
						</div>
						${this.renderPanel()}
					</div>
					<div class="ticker">
						${NEWS.map(([t, w]) => html`<span style="width:${w}px">${t}</span>`)}
					</div>
					<div class="status">
						<span class="dot"><svg width="13" height="13" viewBox="0 0 13 13"><circle cx="6.500" cy="6.500" r="6" fill="#7c8494"/><path d="M4 5l2.500 3L9 5" fill="none" stroke="#22262e" stroke-width="1.500"/></svg></span>
						${INDEXES.map(r => html`<div class="idx"><span>${r[0]}</span><b>${r[1]}</b><b>${r[2]}</b><b>${r[3]}</b><span class="amt">${r[4]}</span></div>`)}
						<span class="total">总成交</span><span class="totalv">5848亿</span>
						<span class="conn">
							<svg width="14" height="14" viewBox="0 0 14 14" fill="none" stroke="#8a909c" stroke-width="1.500"><circle cx="7" cy="7" r="5.500"/><path d="M5 10l4-6"/></svg>
							<i>2</i>已连接
						</span>
						<div class="tray">
							<svg width="16" height="14" viewBox="0 0 16 14" fill="currentColor"><rect x="1" y="1" width="14" height="12" rx="2"/><rect x="4" y="4" width="2" height="2" fill="#22262e"/><rect x="7" y="4" width="2" height="2" fill="#22262e"/><rect x="10" y="4" width="2" height="2" fill="#22262e"/><rect x="4" y="9" width="8" height="1.500" fill="#22262e"/></svg>
							<svg width="16" height="16" viewBox="0 0 16 16" fill="currentColor"><rect x="6" y="1" width="4" height="14" rx="1"/><rect x="2" y="5" width="3" height="7"/><rect x="11" y="5" width="3" height="7"/></svg>
							<svg width="16" height="16" viewBox="0 0 16 16" fill="none" stroke="currentColor" stroke-width="1.500"><circle cx="8" cy="8" r="6" stroke-dasharray="4 2"/><path d="M6 6l2 2 2-2M8 8v3"/></svg>
							<svg width="14" height="18" viewBox="0 0 14 18" fill="#fff"><path d="M1 1h2v2h2V1h4v2h2V1h2v6h-2l1 8h1v2H1v-2h1l1-8H1z"/></svg>
						</div>
					</div>
				</div>
				<aside class="side-bar">
					${['left', 'up', 'down', 'check', 'grid', 'line', 'candle', 'docs', 'F10', 'tree', 'book', 'F12', 'fx', 'ring'].map(n => html`<sidebar-icon name=${n}></sidebar-icon>`)}
					<div class="side-sep"></div>
					${['wave', 'rsi', 'money', 'move', 'pencil'].map(n => html`<sidebar-icon name=${n}></sidebar-icon>`)}
					<div class="side-sep"></div>
					${['Fs', 'refresh'].map(n => html`<sidebar-icon name=${n}></sidebar-icon>`)}
					${['1', '5', '15', '30', '60', '日', '周', '月', 'N', '多', '季', '年'].map((c, i) => html`<div class="ch ${c === '日' ? 'cur' : ''} ${i === 0 ? 'first' : ''}">${c}</div>`)}
				</aside>
			</div>
		`;
	}
}

// legends are positioned from their reference x, one text chunk each
function lineLegend() {
	return svg`
		<text class="gray t" x="3" y="65">迪贝电气(日线 等比前复权)</text>
		<circle cx="158" cy="61" r="5.5" fill="#777"/><path d="M155.500 60l2.500 3 2.500-3" fill="none" stroke="#222" stroke-width="1.5"/>
		<text class="gray t" x="167" y="65">辅助线</text>
		<text class="yel t" x="209" y="65">HHJSJDB: 15.78</text>
		<text class="redt t" x="301" y="65">↑</text>
		<text class="redt t" x="316" y="65">HHJSJDC: 15.74</text>
		<path d="M413.500 55v10M411 62l2.500 4 2.500-4" stroke="#78e8e8" fill="none"/>
		<text class="redt t" x="424" y="65">★遵守纪律★: 100.00</text>
		<text class="redt t" x="545" y="65">★交易之魂★: 100.00</text>`;
}

function bottomLegend() {
	const up = (x: number) => svg`<path d="M${x + 0.5} 494v10M${x - 2} 497l2.500-3 2.500 3" stroke="#ff2020" fill="none"/>`;
	return svg`
		<circle cx="7" cy="499" r="5.5" fill="#777"/><path d="M4.500 498l2.500 3 2.500-3" fill="none" stroke="#222" stroke-width="1.5"/>
		<text class="gray t" x="18" y="503">超级3</text>
		<text class="ora t" x="54" y="503">A: 0.54</text>${up(95)}
		<text class="mag t" x="127" y="503">长线多: -0.11</text>${up(200)}
		<text class="wht t" x="212" y="503">长线空: -0.11</text>${up(285)}
		<text class="redt t" x="296" y="503">短做多: 0.13</text>${up(366)}
		<text class="grn t" x="377" y="503">短做空: -0.14</text>${up(451)}
		<text class="redt t" x="462" y="503">★遵守纪律★: 100.00</text>
		<text class="redt t" x="583" y="503">★交易之魂★: 100.00</text>`;
}
